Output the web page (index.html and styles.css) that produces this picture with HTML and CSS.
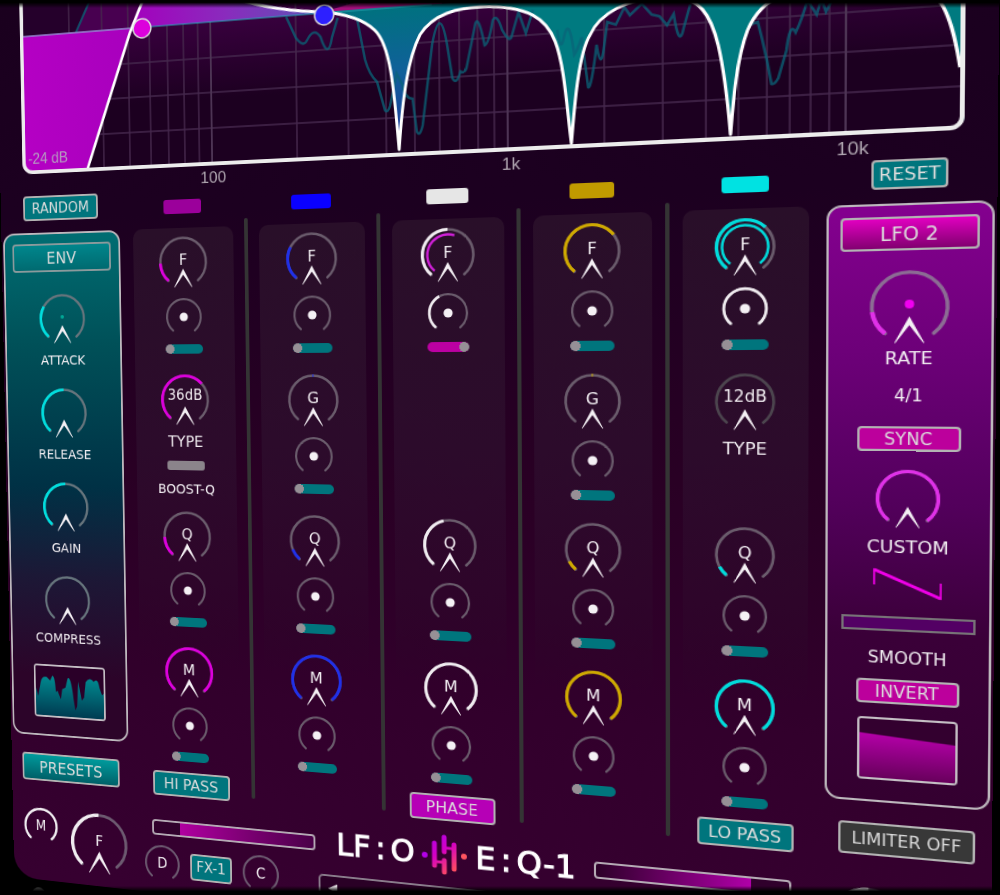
FILE: index.html
```html
<!DOCTYPE html>
<html lang="en">
<head>
<meta charset="utf-8">
<title>LFO EQ-1</title>
<link rel="stylesheet" href="styles.css">
</head>
<body>
<div class="stage">
<main class="plugin">
  <svg class="graph" viewBox="0 0 930 218" preserveAspectRatio="none" role="img" aria-label="EQ curve">
    <defs>
      <clipPath id="frame"><rect x="0" y="-20" width="930" height="215" rx="11"/></clipPath>
      <linearGradient id="glow" x1="0" y1="0" x2="0" y2="1"><stop offset="0.2" stop-color="#3a0040"/><stop offset="0.65" stop-color="#1c0020"/></linearGradient>
      <linearGradient id="low" x1="0" y1="0" x2="1" y2="0"><stop offset="0" stop-color="#b500c4"/><stop offset="1" stop-color="#a800bd"/></linearGradient>
      <linearGradient id="violet" x1="0" y1="0" x2="1" y2="0"><stop offset="0" stop-color="#a400bd"/><stop offset="0.5" stop-color="#8a2bbd"/><stop offset="1" stop-color="#5b55b5"/></linearGradient>
      <linearGradient id="notch" gradientUnits="userSpaceOnUse" x1="0" y1="47" x2="0" y2="190"><stop offset="0" stop-color="#00717f"/><stop offset="0.45" stop-color="#10609a"/><stop offset="1" stop-color="#20349a"/></linearGradient>
    </defs>
    <g clip-path="url(#frame)">
      <rect width="930" height="195" fill="url(#glow)"/>
      <rect width="150" height="47" fill="#25002b"/>
      <path d="M66 47L90 0H150L128 52Z" fill="#480050"/>
      <path class="grid" d="M0 10H930M0 84H930M0 120H930M0 157H930M4 0V195M58 0V195M96 0V195M126 0V195M150 0V195M170 0V195M188 0V195M204 0V195M310 0V195M364 0V195M403 0V195M432 0V195M457 0V195M477 0V195M495 0V195M511 0V195M616 0V195M670 0V195M709 0V195M738 0V195M763 0V195M783 0V195M801 0V195M817 0V195"/>
      <path class="grid grid-major" d="M218 0V195M524 0V195M831 0V195"/>
      <path d="M0 47H130L77 195H0Z" fill="url(#low)"/>
      <path d="M130 47L150 0H200Q270 38 339 46V47Z" fill="url(#violet)"/>
      <path d="M339 46L460 20V47Z" fill="#a3107c"/>
      <path d="M339 46C365 50 382 58 392 68C408 84 411 125 416 189C420 135 426 98 438 76C452 56 475 53 498 53V47Z" fill="url(#notch)"/>
      <path d="M498 53C545 55 562 70 570 92C579 116 581 160 585 191C588 155 592 105 603 88C612 68 638 56 672 56C705 58 714 80 720 106C726 133 729 165 731 190C733 165 736 120 746 94C760 60 790 58 820 56H870C915 58 921 110 926 140L930 195V40H498Z" fill="#007a80"/>
      <path class="trace" d="M66 47L90 0M300 48L310 70Q318 81 322 73Q329 60 336 71Q344 96 348 72L354 53M374 55L382 97Q386 112 394 120L402 149Q405 152 407 145L414 113L420 125Q422 138 430 139L434 172Q437 178 440 166L450 87Q458 45 465 88L470 121Q474 129 478 115Q482 118 484 112L493 69Q496 60 502 91Q506 90 510 67Q514 60 519 77Q526 90 528 85L535 61L542 82L549 60M572 81Q575 104 578 90Q583 65 588 106Q591 102 595 90L601 138Q604 140 609 98Q613 125 616 100L619 77L627 80L635 64L640 72L651 62L660 73L667 75L674 84L680 74Q685 108 689 88L695 66M748 89L755 87L759 104L763 123L767 145Q770 146 773 140L780 115Q783 88 788 99Q794 86 798 70L806 84L810 70L814 82L820 70"/>
      <path d="M0 47H450" stroke="#23a6b2" stroke-width="1"/>
      <path d="M0 47H128" stroke="#d07be0" stroke-width="1"/>
      <path class="curve" d="M77 193L128 52L152 0M200 0C250 34 300 42 339 46C365 50 382 58 392 68C408 84 411 125 416 189C420 135 426 98 438 76C452 56 475 53 498 53C545 55 562 70 570 92C579 116 581 160 585 191C588 155 592 105 603 88C612 68 638 56 672 56C705 58 714 80 720 106C726 133 729 165 731 190C733 165 736 120 746 94C760 60 790 58 820 56H870C915 58 921 110 926 140"/>
      <circle cx="142" cy="48" r="10" fill="#dc00dc" class="node"/>
      <circle cx="340" cy="49" r="10" fill="#2d20ff" class="node"/>
      <text x="7" y="185" class="axis axis-db">-24 dB</text>
    </g>
    <rect x="2" y="-20" width="926" height="214" rx="10" class="bezel"/>
    <text x="219" y="214" class="axis">100</text>
    <text x="527" y="214" class="axis">1k</text>
    <text x="837" y="214" class="axis">10k</text>
  </svg>

  <div class="console">
    <section class="side">
      <div class="head"><button class="btn">RANDOM</button></div>
      <div class="panel env">
        <button class="btn title">ENV</button>
        <div class="dial" data-label="Attack" data-value="29" data-dot="tiny"></div><p>ATTACK</p>
        <div class="dial" data-label="Release" data-value="50"></div><p>RELEASE</p>
        <div class="dial" data-label="Gain" data-value="50"></div><p>GAIN</p>
        <div class="dial" data-label="Compress" data-value="0"></div><p class="tight">COMPRESS</p>
        <svg class="scope" viewBox="0 0 84 58" preserveAspectRatio="none" role="img" aria-label="Envelope">
          <defs><linearGradient id="sea" x1="0" y1="0" x2="0" y2="1"><stop offset="0" stop-color="#008a90"/><stop offset="1" stop-color="#003c52"/></linearGradient></defs>
          <rect width="84" height="58" fill="#2a0028"/>
          <path fill="url(#sea)" d="M0 26L3 36L6 20Q8 11 14 13L18 17L21 11Q24 11 25 30L27 28L31 38L33 26L37 24L40 13Q44 10 47 38L49 50L51 45L53 16L57 38L60 34L62 16Q67 9 72 15Q77 9 79 22L82 30L84 28V58H0Z"/>
        </svg>
      </div>
      <button class="btn title glossy wide">PRESETS</button>
    </section>

    <section class="bands" id="bands"></section>

    <section class="side">
      <div class="head"><button class="btn reset">RESET</button></div>
      <div class="panel lfo">
        <button class="btn title hot">LFO 2</button>
        <div class="dial xl" data-label="Rate" data-value="15" data-dot="glow"></div><p class="rate">RATE</p>
        <p class="ratio">4/1</p>
        <button class="btn pink">SYNC</button>
        <div class="dial" data-label="Custom" data-value="100"></div><p class="custom">CUSTOM</p>
        <svg class="wave" viewBox="0 0 60 32" aria-hidden="true"><path d="M2 17V3L58 28V14" stroke-width="1.6"/><path d="M2 3L58 28"/></svg>
        <input class="smooth" id="smooth" type="range" value="0">
        <label for="smooth">SMOOTH</label>
        <button class="btn pink">INVERT</button>
        <svg class="scope" viewBox="0 0 84 58" preserveAspectRatio="none" role="img" aria-label="LFO shape">
          <defs><linearGradient id="rose" x1="0" y1="0" x2="0" y2="1"><stop offset="0" stop-color="#b400a8"/><stop offset="1" stop-color="#68005c"/></linearGradient></defs>
          <rect width="84" height="58" fill="#33002f"/>
          <path fill="url(#rose)" d="M0 14L84 21V58H0Z"/>
        </svg>
      </div>
      <button class="btn title dark wide">LIMITER OFF</button>
    </section>
  </div>

  <footer class="dock">
    <div class="dial small white" data-label="Mix" data-text="M" data-value="100"></div>
    <div class="dial xl white" data-label="Filter" data-text="F" data-value="50"></div>
    <div class="fx">
      <input class="fader in" type="range" value="17" aria-label="Input">
      <div class="fx-row">
        <div class="dial small" data-label="Depth" data-text="D" data-value="0"></div>
        <button class="btn fx-btn">FX-1</button>
        <div class="dial small" data-label="Color" data-text="C" data-value="0"></div>
      </div>
    </div>
    <div class="brand">
      <h1 class="logo">
        <span>LF</span><span>:</span><span>O</span>
        <svg viewBox="0 0 48 44" aria-hidden="true">
          <defs><linearGradient id="flame" gradientUnits="userSpaceOnUse" x1="10" y1="4" x2="34" y2="36"><stop offset="0" stop-color="#b400e8"/><stop offset="0.45" stop-color="#d400c4"/><stop offset="1" stop-color="#ff4b62"/></linearGradient></defs>
          <g stroke="url(#flame)" stroke-width="5" stroke-linecap="round"><path d="M13 11V34M23 4V19M23 28V40M33 11V36"/><path d="M13 30H23M23 15H33" stroke-width="3"/></g>
          <circle cx="3" cy="24" r="3" fill="#b400e8"/><circle cx="43" cy="22" r="3" fill="#ff5560"/>
        </svg>
        <span>E</span><span>:</span><span>Q-1</span>
      </h1>
      <div class="picker"><button aria-label="Previous preset">◀</button></div>
    </div>
    <input class="fader out" type="range" value="80" aria-label="Output">
    <div class="dial xl white" data-label="Level" data-value="50"></div>
  </footer>
</main>
<div class="screw"></div>
</div>
<script src="app.js"></script>
</body>
</html>
```
FILE: styles.css
```css
* { box-sizing: border-box; }

body {
  margin: 0;
  height: 100vh;
  overflow: hidden;
  background: #000;
  color: #f2eef2;
  font-family: "DejaVu Sans", sans-serif;
  font-size: 14px;
}

/* soft black edges of the display */
body::before,
body::after {
  content: "";
  position: fixed;
  left: 0;
  right: 0;
  top: 0;
  height: 8px;
  background: linear-gradient(#000 30%, transparent);
  pointer-events: none;
  z-index: 2;
}
body::after {
  top: auto;
  bottom: 0;
  height: 9px;
  background: linear-gradient(transparent, #000 60%);
}

/* the whole device stands at an angle to the viewer */
.stage {
  margin-right: 16px;
  transform-origin: 0 0;
  transform: matrix3d(0.82427, -0.07248, 0, -0.00018892, 0.018355, 0.91813, 0, 0.000025957, 0, 0, 1, 0, -3.4208, -4.569, 0, 0.993629);
}

.plugin {
  padding: 0 2px;
  border-radius: 0 0 28px 28px;
  background: linear-gradient(#1a001e 0, #1c0020 240px, #290024 520px, #32002c 760px, #360030 100%);
}

p { margin: 0; }
button { font: inherit; color: inherit; cursor: pointer; }

/* graph */
.graph {
  display: block;
  width: calc(100% - 50px);
  height: 218px;
  margin: 0 25px;
  overflow: visible;
}
.grid { fill: none; stroke: #46284d; stroke-width: 1.5; }
.grid-major { stroke-width: 2; stroke: #4d3454; }
.curve { fill: none; stroke: #fff; stroke-width: 3; stroke-linejoin: round; }
.trace { fill: none; stroke: #0a6478; stroke-width: 2.5; opacity: 0.75; }
.node { stroke: #ddd; stroke-width: 1.5; }
.bezel { fill: none; stroke: #ececec; stroke-width: 4; }
.axis { font: 17px "Liberation Sans", Arial, sans-serif; fill: #b0a6b1; text-anchor: middle; }
.axis-db { font-size: 16px; text-anchor: start; fill: #b59cc0; }

/* console columns */
.console {
  display: grid;
  grid-template-columns: 138fr 672fr 140fr;
  column-gap: 15px;
}
.side, .strip { display: flex; flex-direction: column; align-items: center; }
.head { height: 42px; padding-top: 2px; }

.panel {
  width: 100%;
  height: 555px;
  display: flex;
  flex-direction: column;
  align-items: center;
  border: 2px solid #bdb8bd;
  border-radius: 13px;
  padding-top: 10px;
}
.env { background: linear-gradient(#006d72, #005058 22%, #003145 50%, #1c1836 68%, #2c0429 88%); --hue: #00dede; --track: #66747c; }
.lfo { background: linear-gradient(#84008f, #6c0078 25%, #52005b 50%, #3a0038 72%, #340030); --hue: #e030e8; --track: #8c6c94; }

.btn {
  height: 27px;
  padding: 0 8px;
  border: 2px solid #b3b3b3;
  border-radius: 4px;
  background: #00757d;
  color: #dcdcdc;
  font-size: 15px;
  line-height: 20px;
  white-space: nowrap;
}
.reset { padding: 0 4px; font-size: 16px; }
.title { width: 116px; height: 31px; font-size: 17px; flex: none; }
.env .title { background: linear-gradient(#00868c, #006a70); border-color: #8b9a9c; }
.hot { background: linear-gradient(#e000c0, #820070); }
.pink { width: 87px; height: 23px; line-height: 16px; background: #bc009c; }
.glossy { background: linear-gradient(#009a9c, #006068); }
.dark { background: #383838; font-size: 15px; padding: 0; }
.wide { margin-top: 20px; }

/* dials */
.dial { position: relative; flex: none; width: 54px; height: 54px; }
.dial.small { width: 40px; height: 40px; }
.dial.xl { width: 67px; height: 67px; }
.dial svg { display: block; width: 100%; height: 100%; overflow: visible; }
.dial input { position: absolute; inset: 0; width: 100%; height: 100%; margin: 0; opacity: 0; }
.dial span {
  position: absolute;
  inset: 0 0 6px;
  display: grid;
  place-items: center;
  font-size: 16px;
}
.dial.small span { inset: 0; font-size: 15px; }
.dial.long span { inset: 0 0 10px; font-size: 15px; }
.track, .value { fill: none; stroke-linecap: round; }
.track { stroke: var(--track, #6a5c6c); }
.value { stroke: var(--hue, #fff); stroke-linecap: butt; }
.ring2 { stroke: var(--ring, #fff); }
.tip { fill: #f4f0f4; }
.white { --hue: #f0ecf0; }

.env .dial { margin-top: 23px; }
.env .title + .dial { margin-top: 24px; }
.panel p { height: 16px; line-height: 16px; }
.env p { margin-top: 10px; }
.env .tight { margin-top: 7px; }
.scope { width: 85px; height: 59px; border: 2px solid #c4bec4; border-radius: 4px; margin-top: 22px; flex: none; }

.lfo .xl { margin-top: 18px; }
.lfo .rate { margin-top: 6px; font-size: 16px; }
.lfo .ratio { margin: 18px 0 20px; font-size: 15px; }
.lfo .dial:not(.xl) { margin-top: 17px; }
.lfo .custom { margin-top: 10px; font-size: 16px; }
.wave { width: 60px; height: 32px; margin-top: 10px; fill: none; stroke: #f000e8; stroke-width: 3; flex: none; }
.smooth {
  appearance: none;
  width: 113px;
  height: 14px;
  margin: 14px 0 0;
  border: 2px solid #777377;
  background: #530064;
  flex: none;
}
.lfo label { font-size: 15px; height: 16px; line-height: 16px; margin: 17px 0 12px; }
.lfo .scope { margin-top: 13px; }
input[type="range"]::-webkit-slider-thumb { appearance: none; width: 0; height: 0; }

/* bands */
.bands { display: flex; }
.strip { flex: 1; }
.rule { width: 4px; margin: 34px 12px 5px; background: #343434; border: 0; border-radius: 2px; }
.swatch { width: 42px; height: 15px; margin-top: 12px; border: 0; border-radius: 3px; background: var(--chip, var(--hue)); }
.head-chip { height: 42px; }
.card {
  width: 100%;
  padding-top: 9px;
  border-radius: 10px;
  background: linear-gradient(#290f29, #2c0b2b 40%, #2e052a 65%, transparent 82%);
}
.slot { height: 146px; display: flex; flex-direction: column; align-items: center; }
.slot:last-child { height: 124px; }
.slot .small { margin: 11px 0 9px; --hue: #f0ecf0; }
.toggle {
  appearance: none;
  width: 42px;
  height: 10px;
  margin: 0;
  border-radius: 5px;
  background: radial-gradient(circle at 5px 5px, #969096 5px, transparent 5px), #00757d;
}
.toggle:checked { background: radial-gradient(circle at 37px 5px, #969096 5px, transparent 5px), #bc00a2; }
.caption { font-size: 16px; height: 16px; line-height: 16px; margin-top: 10px; }
.boost { appearance: none; width: 42px; height: 10px; margin: 12px 0; border-radius: 3px; background: #8b848b; }
.boost-label { height: 16px; line-height: 16px; }
.mode { width: 87px; margin-top: 12px; padding: 0; font-size: 16px; }
.mode.alt { background: #b600b6; }

/* dock */
.dock {
  display: grid;
  grid-template-columns: 40px 67px 195px 1fr 200px 67px;
  column-gap: 16px;
  align-items: start;
  height: 108px;
  padding: 27px 68px 0 12px;
}
.dock .dial { --track: #6c5a70; }
.fx { padding-left: 13px; }
.fader {
  appearance: none;
  display: block;
  width: 182px;
  height: 17px;
  margin: 0;
  border: 2px solid #b5aab5;
  border-radius: 4px;
}
.in { background: linear-gradient(90deg, #30002c 17%, #b000a0 17%, #4a0048); }
.out { background: linear-gradient(90deg, #2c0028, #b000a8 81%, #30002c 81%); }
.fx-row { display: flex; gap: 12px; align-items: center; margin: 11px 0 0 -9px; }
.fx-btn { width: 47px; height: 29px; padding: 0; }
.brand { margin: -14px -18px 0 -13px; }
.logo {
  display: flex;
  align-items: center;
  justify-content: center;
  gap: 5px;
  height: 44px;
  margin: 0;
  font-size: 32px;
  font-weight: 400;
  line-height: 44px;
  color: #fff;
  -webkit-text-stroke: 1px #fff;
}
.logo svg { width: 48px; height: 44px; margin: 0 2px; flex: none; }
.picker { height: 32px; margin-top: 11px; border: 2px solid #8a7d8c; border-radius: 5px; padding-left: 8px; background: #2a0026; }
.picker button { border: 0; padding: 0; background: none; font-size: 13px; line-height: 24px; }

.screw { width: 16px; height: 16px; margin: 9px 0 0 22px; border-radius: 50%; background: #4a4a4a; }
```
FILE: app.js
```js
const NS = "http://www.w3.org/2000/svg";

function arc(cx, r, value, width, cls) {
  const a = (40 * Math.PI) / 180;
  const dx = r * Math.sin(a), dy = r * Math.cos(a);
  const p = document.createElementNS(NS, "path");
  p.setAttribute("d", `M${cx - dx} ${cx + dy}A${r} ${r} 0 1 1 ${cx + dx} ${cx + dy}`);
  p.setAttribute("pathLength", 100);
  p.setAttribute("stroke-width", width);
  p.setAttribute("class", cls);
  if (value < 100) p.setAttribute("stroke-dasharray", `${value} 200`);
  return p;
}

function shape(name, attrs) {
  const el = document.createElementNS(NS, name);
  for (const k in attrs) el.setAttribute(k, attrs[k]);
  return el;
}

function fillDial(el) {
  const d = el.dataset;
  const small = el.classList.contains("small");
  const value = Number(d.value || 0);
  const svg = shape("svg", { viewBox: "0 0 54 54" });
  const w = small ? 3 : 2.6;
  svg.append(arc(27, 25.5, 100, w, "track"));
  if (value > 0) svg.append(arc(27, 25.5, value, small ? 3.6 : 3.2, "value"));
  if (d.ring) svg.append(arc(27, 20.5, Number(d.ring), 2.4, "value ring2"));
  if (d.tick) svg.append(shape("path", { d: "M27 0V3", stroke: "var(--hue)", "stroke-width": 1 }));
  if (!small) svg.append(shape("path", { class: "tip", d: "M27 34L37.2 53.5H36.4L27 40.5L17.6 53.5H16.8Z" }));
  if (small && !d.text) svg.append(shape("circle", { cx: 27, cy: 27, r: 6.2, fill: "#f4f0f4" }));
  if (d.dot === "tiny") svg.append(shape("circle", { cx: 27, cy: 25, r: 2, fill: "#00a896" }));
  if (d.dot === "glow") svg.append(shape("circle", { cx: 27, cy: 25, r: 3.2, fill: "#f000f0" }));
  el.append(svg);
  if (d.text) {
    const t = document.createElement("span");
    t.textContent = d.text;
    if (d.text.length > 1) el.classList.add("long");
    el.append(t);
  }
  const input = document.createElement("input");
  input.type = "range";
  input.value = value;
  input.setAttribute("aria-label", d.label);
  el.append(input);
}

const bands = [
  { hue: "#dc00dc", chip: "#9b009b", mode: "HI PASS", f: 17, type: "36dB", typeValue: 67, boost: true, q: 17 },
  { hue: "#2030e8", chip: "#0a00ff", f: 28, g: true, q: 10 },
  { hue: "#f0ecf0", chip: "#e6e6e6", mode: "PHASE", alt: true, f: 50, ring: 57, ringHue: "#d020d8", mod: 40, on: true, q: 45 },
  { hue: "#cfa900", chip: "#c09a00", f: 69, g: true, q: 8 },
  { hue: "#00dcdc", chip: "#00e2e2", mode: "LO PASS", f: 66, ring: 100, ringHue: "#00dcdc", mod: 100, type: "12dB", typeValue: 0, q: 8 }
];

const dial = (text, value, extra = "") =>
  `<div class="dial" data-label="${text}" data-text="${text}" data-value="${value}" ${extra}></div>`;
const mod = (name, value = 0, on = false) =>
  `<div class="dial small" data-label="${name} modulation" data-value="${value}"></div>
   <input type="checkbox" class="toggle" aria-label="${name} source" ${on ? "checked" : ""}>`;

document.getElementById("bands").innerHTML = bands.map((b, i) => {
  let second = "";
  if (b.g) second = dial("G", 0, 'data-tick="1"') + mod("G");
  if (b.type) second = dial(b.type, b.typeValue, b.typeValue ? "" : 'style="--track:#4c454e"') + `<p class="caption">TYPE</p>`;
  if (b.boost) second += `<input type="checkbox" class="boost" id="boost"><label class="boost-label" for="boost">BOOST-Q</label>`;
  return `<div class="strip" style="--hue:${b.hue};--chip:${b.chip};--ring:${b.ringHue || b.hue}">
    <div class="head-chip"><button class="swatch" aria-label="Band ${i + 1}"></button></div>
    <div class="card">
      <div class="slot">${dial("F", b.f, b.ring ? `data-ring="${b.ring}"` : "")}${mod("F", b.mod, b.on)}</div>
      <div class="slot">${second}</div>
      <div class="slot">${dial("Q", b.q)}${mod("Q")}</div>
      <div class="slot">${dial("M", 100)}${mod("M")}</div>
    </div>
    ${b.mode ? `<button class="btn mode ${b.alt ? "alt" : ""}">${b.mode}</button>` : ""}
  </div>`;
}).join('<hr class="rule">');

document.querySelectorAll(".dial").forEach(fillDial);
```
